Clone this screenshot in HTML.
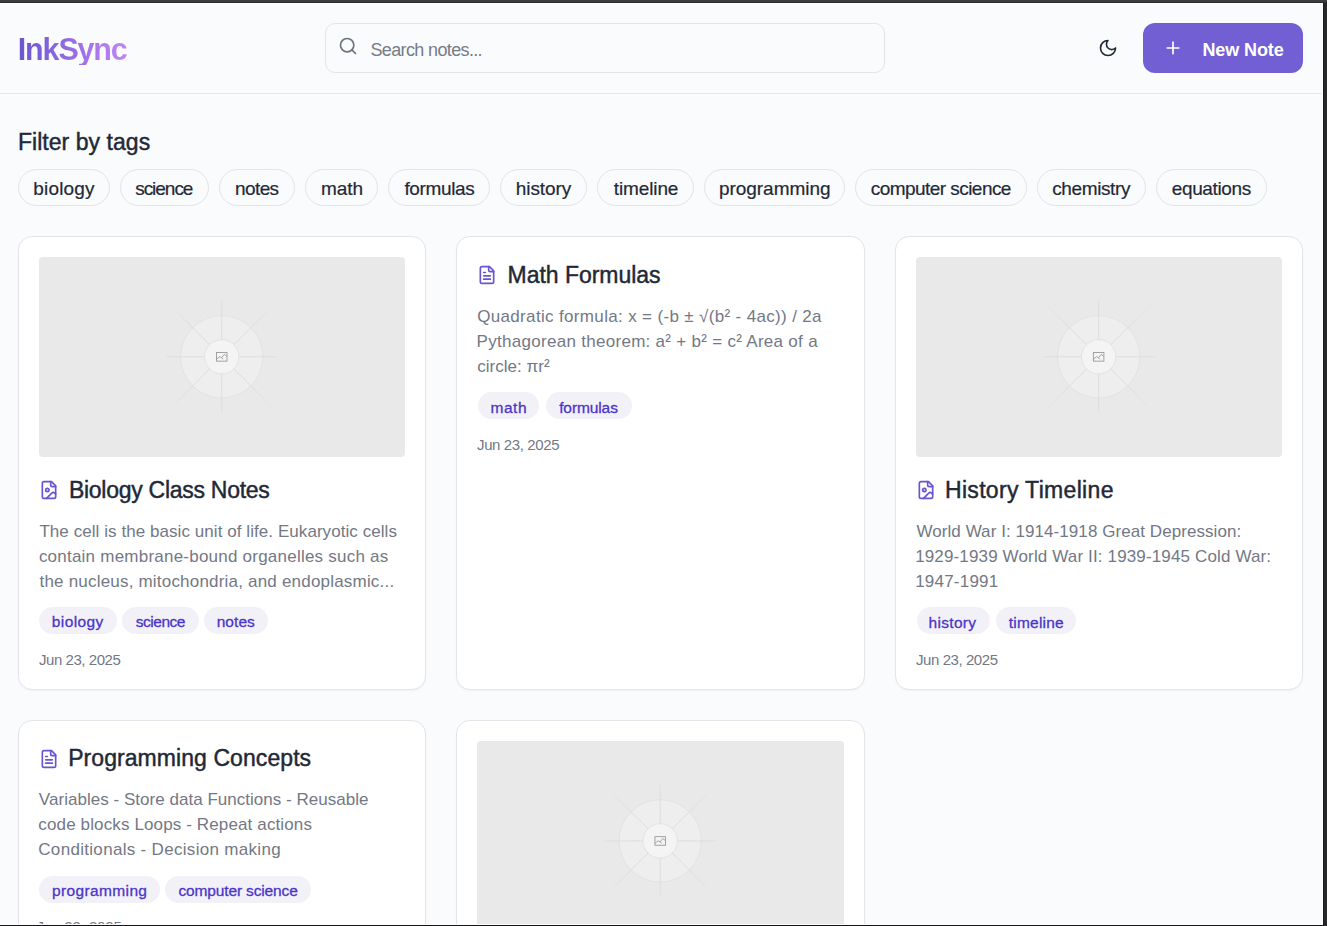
<!DOCTYPE html>
<html><head><meta charset="utf-8"><title>InkSync</title>
<style>
html,body{margin:0;padding:0}
body{width:1327px;height:926px;background:#262729;position:relative;overflow:hidden;font-family:"Liberation Sans",sans-serif}
.topbar{position:absolute;left:0;top:0;width:1327px;height:3px;background:linear-gradient(#3d3d3d 0,#3d3d3d 2px,#2c2c2c 2px)}
.rightbar{position:absolute;left:1323px;top:3px;width:4px;height:923px;background:linear-gradient(90deg,#1c1d1f 0,#1c1d1f 1px,#262729 1px)}
.botbar{position:absolute;left:0;top:925px;width:1323px;height:1px;background:#141516}
.vp{position:absolute;left:0;top:3px;width:1323px;height:922px;background:#fff;overflow:hidden}
.inner{position:absolute;left:0;top:1px;width:1322px;height:920px;background:#fafbfd}
.wl{position:absolute;background:#fff}
.hdr{position:absolute;left:0;top:93px;width:1322px;height:1px;background:#e5e7eb}
.t{position:absolute;white-space:nowrap}
.semi{-webkit-text-stroke:0.45px currentColor}
.grad{background:linear-gradient(90deg,#6a55d0 0%,#c385f6 100%);-webkit-background-clip:text;background-clip:text;color:transparent}
.ic{position:absolute;display:block}
.search{position:absolute;left:325px;top:23px;width:560px;height:50px;box-sizing:border-box;border:1px solid #e3e4ea;border-radius:10px;background:#fafbfd}
.btn{position:absolute;left:1143px;top:23px;width:160px;height:50px;border-radius:12px;background:#715fd3}
.fp{position:absolute;box-sizing:border-box;border:1px solid #e3e4ea;border-radius:999px;background:#fafbfd;text-align:center;color:#1f2937;white-space:nowrap;-webkit-text-stroke:0.2px currentColor}
.card{position:absolute;box-sizing:border-box;border:1px solid #e4e5eb;border-radius:14px;background:#fff;box-shadow:0 1px 2px rgba(0,0,0,0.04)}
.cp{position:absolute;box-sizing:border-box;border-radius:999px;background:#f3f1f8;text-align:center;color:#4a35c9;white-space:nowrap;-webkit-text-stroke:0.3px currentColor}
.ph{position:absolute;background:#e9e9e9;border-radius:4px;overflow:hidden}
.ph svg{display:block}
sup{font-size:0.62em;position:relative;top:-0.1em;vertical-align:top;line-height:0}
</style></head><body>
<div class="vp"><div class="inner"></div></div>
<div class="hdr"></div>
<div class="search"></div>
<div class="btn"></div>

<svg class="ic" style="left:338.00px;top:36.10px;width:20px;height:20px;" viewBox="0 0 24 24" fill="none" stroke="#6b7280" stroke-width="2" stroke-linecap="round" stroke-linejoin="round"><circle cx="11" cy="11" r="8"/><path d="m21 21-4.3-4.3"/></svg>
<svg class="ic" style="left:1097.80px;top:38.30px;width:20px;height:20px;" viewBox="0 0 24 24" fill="none" stroke="#1f2937" stroke-width="2" stroke-linecap="round" stroke-linejoin="round"><path d="M12 3a6 6 0 0 0 9 9 9 9 0 1 1-9-9Z"/></svg>
<svg class="ic" style="left:1163.20px;top:38.20px;width:20px;height:20px;" viewBox="0 0 24 24" fill="none" stroke="#ffffff" stroke-width="2" stroke-linecap="round" stroke-linejoin="round"><path d="M5 12h14"/><path d="M12 5v14"/></svg>
<div class="fp" style="left:18.00px;top:169.00px;width:92.00px;height:37.00px;font-size:19px;line-height:38.20px;letter-spacing:0.180px;text-indent:0.16px">biology</div>
<div class="fp" style="left:120.00px;top:169.00px;width:89.00px;height:37.00px;font-size:19px;line-height:38.20px;letter-spacing:-1.027px;text-indent:-1.42px">science</div>
<div class="fp" style="left:219.00px;top:169.00px;width:76.00px;height:37.00px;font-size:19px;line-height:38.20px;letter-spacing:-0.614px;text-indent:-0.44px">notes</div>
<div class="fp" style="left:305.00px;top:169.00px;width:73.00px;height:37.00px;font-size:19px;line-height:38.20px;letter-spacing:-0.041px;text-indent:0.90px">math</div>
<div class="fp" style="left:388.00px;top:169.00px;width:102.00px;height:37.00px;font-size:19px;line-height:38.20px;letter-spacing:-0.372px;text-indent:0.78px">formulas</div>
<div class="fp" style="left:500.00px;top:169.00px;width:87.00px;height:37.00px;font-size:19px;line-height:38.20px;letter-spacing:-0.057px;text-indent:0.00px">history</div>
<div class="fp" style="left:597.00px;top:169.00px;width:97.00px;height:37.00px;font-size:19px;line-height:38.20px;letter-spacing:-0.111px;text-indent:1.06px">timeline</div>
<div class="fp" style="left:704.00px;top:169.00px;width:141.00px;height:37.00px;font-size:19px;line-height:38.20px;letter-spacing:-0.022px;text-indent:0.46px">programming</div>
<div class="fp" style="left:855.00px;top:169.00px;width:172.00px;height:37.00px;font-size:19px;line-height:38.20px;letter-spacing:-0.552px;text-indent:-0.32px">computer science</div>
<div class="fp" style="left:1037.00px;top:169.00px;width:109.00px;height:37.00px;font-size:19px;line-height:38.20px;letter-spacing:-0.387px;text-indent:-0.68px">chemistry</div>
<div class="fp" style="left:1156.00px;top:169.00px;width:111.00px;height:37.00px;font-size:19px;line-height:38.20px;letter-spacing:-0.359px;text-indent:-0.32px">equations</div>
<div class="card" style="left:18.00px;top:236.00px;width:408.00px;height:454.00px"></div>
<div class="card" style="left:456.00px;top:236.00px;width:409.00px;height:454.00px"></div>
<div class="card" style="left:895.00px;top:236.00px;width:408.00px;height:454.00px"></div>
<div class="card" style="left:18.00px;top:720.00px;width:408.00px;height:460.00px"></div>
<div class="card" style="left:456.00px;top:720.00px;width:409.00px;height:460.00px"></div>
<div class="ph" style="left:39.40px;top:257.40px;width:365.50px;height:199.60px"><svg width="365.50" height="199.60" viewBox="0 0 365.50 199.60">
<defs><radialGradient id="fade39257" gradientUnits="userSpaceOnUse" cx="182.75" cy="99.80000000000001" r="79.52"><stop offset="0" stop-color="#d6d6d6"/><stop offset="0.6" stop-color="#dadada"/><stop offset="1" stop-color="#e9e9e9"/></radialGradient></defs>
<circle cx="182.75" cy="99.80000000000001" r="41.2" fill="#eeeeee" stroke="#e0e0e0" stroke-width="0.8"/>
<g stroke-width="0.8"><line x1="182.75" y1="99.80000000000001" x2="238.75" y2="99.80000000000001" stroke="url(#fade39257)"/><line x1="182.75" y1="99.80000000000001" x2="126.75" y2="99.80000000000001" stroke="url(#fade39257)"/><line x1="182.75" y1="99.80000000000001" x2="182.75" y2="155.8" stroke="url(#fade39257)"/><line x1="182.75" y1="99.80000000000001" x2="182.75" y2="43.80000000000001" stroke="url(#fade39257)"/><line x1="182.75" y1="99.80000000000001" x2="238.75" y2="155.8" stroke="url(#fade39257)"/><line x1="182.75" y1="99.80000000000001" x2="238.75" y2="43.80000000000001" stroke="url(#fade39257)"/><line x1="182.75" y1="99.80000000000001" x2="126.75" y2="155.8" stroke="url(#fade39257)"/><line x1="182.75" y1="99.80000000000001" x2="126.75" y2="43.80000000000001" stroke="url(#fade39257)"/></g>
<circle cx="182.75" cy="99.80000000000001" r="17.2" fill="#f4f4f4" stroke="#dedede" stroke-width="0.8"/>
<g transform="translate(177.05,95.10000000000001)" fill="none" stroke="#9a9a9a" stroke-width="0.9"><rect x="0.45" y="0.45" width="10.5" height="8.6"/><path d="M0.6 7 L3.5 4.6 L5.6 5.6 L8.3 2.3 L10.6 4.2"/><path d="M5.6 5.6 L7 7.2"/></g>
</svg></div>
<div class="ph" style="left:916.40px;top:257.40px;width:365.30px;height:199.60px"><svg width="365.30" height="199.60" viewBox="0 0 365.30 199.60">
<defs><radialGradient id="fade916257" gradientUnits="userSpaceOnUse" cx="182.65000000000003" cy="99.80000000000001" r="79.52"><stop offset="0" stop-color="#d6d6d6"/><stop offset="0.6" stop-color="#dadada"/><stop offset="1" stop-color="#e9e9e9"/></radialGradient></defs>
<circle cx="182.65000000000003" cy="99.80000000000001" r="41.2" fill="#eeeeee" stroke="#e0e0e0" stroke-width="0.8"/>
<g stroke-width="0.8"><line x1="182.65000000000003" y1="99.80000000000001" x2="238.65000000000003" y2="99.80000000000001" stroke="url(#fade916257)"/><line x1="182.65000000000003" y1="99.80000000000001" x2="126.65000000000003" y2="99.80000000000001" stroke="url(#fade916257)"/><line x1="182.65000000000003" y1="99.80000000000001" x2="182.65000000000003" y2="155.8" stroke="url(#fade916257)"/><line x1="182.65000000000003" y1="99.80000000000001" x2="182.65000000000003" y2="43.80000000000001" stroke="url(#fade916257)"/><line x1="182.65000000000003" y1="99.80000000000001" x2="238.65000000000003" y2="155.8" stroke="url(#fade916257)"/><line x1="182.65000000000003" y1="99.80000000000001" x2="238.65000000000003" y2="43.80000000000001" stroke="url(#fade916257)"/><line x1="182.65000000000003" y1="99.80000000000001" x2="126.65000000000003" y2="155.8" stroke="url(#fade916257)"/><line x1="182.65000000000003" y1="99.80000000000001" x2="126.65000000000003" y2="43.80000000000001" stroke="url(#fade916257)"/></g>
<circle cx="182.65000000000003" cy="99.80000000000001" r="17.2" fill="#f4f4f4" stroke="#dedede" stroke-width="0.8"/>
<g transform="translate(176.95000000000005,95.10000000000001)" fill="none" stroke="#9a9a9a" stroke-width="0.9"><rect x="0.45" y="0.45" width="10.5" height="8.6"/><path d="M0.6 7 L3.5 4.6 L5.6 5.6 L8.3 2.3 L10.6 4.2"/><path d="M5.6 5.6 L7 7.2"/></g>
</svg></div>
<div class="ph" style="left:477.20px;top:741.20px;width:366.40px;height:199.80px"><svg width="366.40" height="199.80" viewBox="0 0 366.40 199.80">
<defs><radialGradient id="fade477741" gradientUnits="userSpaceOnUse" cx="183.20000000000002" cy="99.89999999999998" r="79.52"><stop offset="0" stop-color="#d6d6d6"/><stop offset="0.6" stop-color="#dadada"/><stop offset="1" stop-color="#e9e9e9"/></radialGradient></defs>
<circle cx="183.20000000000002" cy="99.89999999999998" r="41.2" fill="#eeeeee" stroke="#e0e0e0" stroke-width="0.8"/>
<g stroke-width="0.8"><line x1="183.20000000000002" y1="99.89999999999998" x2="239.20000000000002" y2="99.89999999999998" stroke="url(#fade477741)"/><line x1="183.20000000000002" y1="99.89999999999998" x2="127.20000000000002" y2="99.89999999999998" stroke="url(#fade477741)"/><line x1="183.20000000000002" y1="99.89999999999998" x2="183.20000000000002" y2="155.89999999999998" stroke="url(#fade477741)"/><line x1="183.20000000000002" y1="99.89999999999998" x2="183.20000000000002" y2="43.89999999999998" stroke="url(#fade477741)"/><line x1="183.20000000000002" y1="99.89999999999998" x2="239.20000000000002" y2="155.89999999999998" stroke="url(#fade477741)"/><line x1="183.20000000000002" y1="99.89999999999998" x2="239.20000000000002" y2="43.89999999999998" stroke="url(#fade477741)"/><line x1="183.20000000000002" y1="99.89999999999998" x2="127.20000000000002" y2="155.89999999999998" stroke="url(#fade477741)"/><line x1="183.20000000000002" y1="99.89999999999998" x2="127.20000000000002" y2="43.89999999999998" stroke="url(#fade477741)"/></g>
<circle cx="183.20000000000002" cy="99.89999999999998" r="17.2" fill="#f4f4f4" stroke="#dedede" stroke-width="0.8"/>
<g transform="translate(177.50000000000003,95.19999999999997)" fill="none" stroke="#9a9a9a" stroke-width="0.9"><rect x="0.45" y="0.45" width="10.5" height="8.6"/><path d="M0.6 7 L3.5 4.6 L5.6 5.6 L8.3 2.3 L10.6 4.2"/><path d="M5.6 5.6 L7 7.2"/></g>
</svg></div>
<svg class="ic" style="left:39.40px;top:479.80px;width:20px;height:20px;" viewBox="0 0 24 24" fill="none" stroke="#6a55d0" stroke-width="2" stroke-linecap="round" stroke-linejoin="round"><path d="M15 2H6a2 2 0 0 0-2 2v16a2 2 0 0 0 2 2h12a2 2 0 0 0 2-2V7Z"/><path d="M14 2v4a2 2 0 0 0 2 2h4"/><circle cx="10" cy="12" r="2"/><path d="m20 17-1.296-1.296a2.41 2.41 0 0 0-3.408 0L9 22"/></svg>
<svg class="ic" style="left:477.20px;top:264.80px;width:20px;height:20px;" viewBox="0 0 24 24" fill="none" stroke="#6a55d0" stroke-width="2" stroke-linecap="round" stroke-linejoin="round"><path d="M15 2H6a2 2 0 0 0-2 2v16a2 2 0 0 0 2 2h12a2 2 0 0 0 2-2V7Z"/><path d="M14 2v4a2 2 0 0 0 2 2h4"/><path d="M10 9H8"/><path d="M16 13H8"/><path d="M16 17H8"/></svg>
<svg class="ic" style="left:916.30px;top:479.80px;width:20px;height:20px;" viewBox="0 0 24 24" fill="none" stroke="#6a55d0" stroke-width="2" stroke-linecap="round" stroke-linejoin="round"><path d="M15 2H6a2 2 0 0 0-2 2v16a2 2 0 0 0 2 2h12a2 2 0 0 0 2-2V7Z"/><path d="M14 2v4a2 2 0 0 0 2 2h4"/><circle cx="10" cy="12" r="2"/><path d="m20 17-1.296-1.296a2.41 2.41 0 0 0-3.408 0L9 22"/></svg>
<svg class="ic" style="left:39.40px;top:749.00px;width:20px;height:20px;" viewBox="0 0 24 24" fill="none" stroke="#6a55d0" stroke-width="2" stroke-linecap="round" stroke-linejoin="round"><path d="M15 2H6a2 2 0 0 0-2 2v16a2 2 0 0 0 2 2h12a2 2 0 0 0 2-2V7Z"/><path d="M14 2v4a2 2 0 0 0 2 2h4"/><path d="M10 9H8"/><path d="M16 13H8"/><path d="M16 17H8"/></svg>
<div class="cp" style="left:39.00px;top:607.00px;width:77.70px;height:27.00px;font-size:15.5px;line-height:30.00px;letter-spacing:0.398px;text-indent:-0.16px">biology</div>
<div class="cp" style="left:121.90px;top:607.00px;width:76.70px;height:27.00px;font-size:15.5px;line-height:30.00px;letter-spacing:-0.485px;text-indent:0.42px">science</div>
<div class="cp" style="left:204.30px;top:607.00px;width:63.50px;height:27.00px;font-size:15.5px;line-height:30.00px;letter-spacing:0.082px;text-indent:-0.50px">notes</div>
<div class="cp" style="left:477.50px;top:392.00px;width:61.90px;height:27.00px;font-size:15.5px;line-height:31.00px;letter-spacing:0.515px;text-indent:0.70px">math</div>
<div class="cp" style="left:545.70px;top:392.00px;width:86.00px;height:27.00px;font-size:15.5px;line-height:31.00px;letter-spacing:-0.100px;text-indent:-0.42px">formulas</div>
<div class="cp" style="left:916.50px;top:607.00px;width:73.10px;height:27.00px;font-size:15.5px;line-height:32.00px;letter-spacing:0.300px;text-indent:-1.16px">history</div>
<div class="cp" style="left:995.60px;top:607.00px;width:80.70px;height:27.00px;font-size:15.5px;line-height:32.00px;letter-spacing:0.232px;text-indent:0.76px">timeline</div>
<div class="cp" style="left:39.20px;top:876.00px;width:120.50px;height:27.00px;font-size:15.5px;line-height:30.00px;letter-spacing:0.373px;text-indent:0.48px">programming</div>
<div class="cp" style="left:164.90px;top:876.00px;width:145.80px;height:27.00px;font-size:15.5px;line-height:30.00px;letter-spacing:-0.137px;text-indent:0.54px">computer science</div>
<div class="t grad" id="logo" style="left:17.82px;top:34.00px;font-size:30.5px;line-height:30.5px;letter-spacing:-1.165px;font-weight:bold;">InkSync</div>
<div class="t" id="search" style="left:370.48px;top:41.00px;font-size:18px;line-height:18px;letter-spacing:-0.638px;color:#767b88;">Search notes...</div>
<div class="t" id="newnote" style="left:1202.48px;top:41.00px;font-size:18px;line-height:18px;letter-spacing:-0.120px;font-weight:bold;color:#ffffff;">New Note</div>
<div class="t semi" id="filter" style="left:17.95px;top:131.00px;font-size:23px;line-height:23px;letter-spacing:0.043px;color:#1f2937;">Filter by tags</div>
<div class="t semi" id="t1" style="left:68.94px;top:479.00px;font-size:23px;line-height:23px;letter-spacing:-0.273px;color:#1f2937;">Biology Class Notes</div>
<div class="t" id="b1a" style="left:39.41px;top:523.00px;font-size:17px;line-height:17px;letter-spacing:0.063px;color:#737885;">The cell is the basic unit of life. Eukaryotic cells</div>
<div class="t" id="b1b" style="left:38.88px;top:548.00px;font-size:17px;line-height:17px;letter-spacing:0.229px;color:#737885;">contain membrane-bound organelles such as</div>
<div class="t" id="b1c" style="left:39.50px;top:573.00px;font-size:17px;line-height:17px;letter-spacing:0.199px;color:#737885;">the nucleus, mitochondria, and endoplasmic...</div>
<div class="t" id="d1" style="left:38.96px;top:652.00px;font-size:15px;line-height:15px;letter-spacing:-0.440px;color:#737885;">Jun 23, 2025</div>
<div class="t semi" id="t2" style="left:507.53px;top:264.00px;font-size:23px;line-height:23px;letter-spacing:-0.029px;color:#1f2937;">Math Formulas</div>
<div class="t" id="b2a" style="left:477.14px;top:308.00px;font-size:17px;line-height:17px;letter-spacing:0.343px;color:#737885;">Quadratic formula: x = (-b ± √(b² - 4ac)) / 2a</div>
<div class="t" id="b2b" style="left:476.60px;top:333.00px;font-size:17px;line-height:17px;letter-spacing:0.289px;color:#737885;">Pythagorean theorem: a² + b² = c² Area of a</div>
<div class="t" id="b2c" style="left:477.14px;top:358.00px;font-size:17px;line-height:17px;letter-spacing:0.030px;color:#737885;">circle: πr²</div>
<div class="t" id="d2" style="left:477.06px;top:437.00px;font-size:15px;line-height:15px;letter-spacing:-0.390px;color:#737885;">Jun 23, 2025</div>
<div class="t semi" id="t3" style="left:944.94px;top:479.00px;font-size:23px;line-height:23px;letter-spacing:0.329px;color:#1f2937;">History Timeline</div>
<div class="t" id="b3a" style="left:916.43px;top:523.00px;font-size:17px;line-height:17px;letter-spacing:0.066px;color:#737885;">World War I: 1914-1918 Great Depression:</div>
<div class="t" id="b3b" style="left:915.16px;top:548.00px;font-size:17px;line-height:17px;letter-spacing:0.143px;color:#737885;">1929-1939 World War II: 1939-1945 Cold War:</div>
<div class="t" id="b3c" style="left:915.16px;top:573.00px;font-size:17px;line-height:17px;letter-spacing:0.219px;color:#737885;">1947-1991</div>
<div class="t" id="d3" style="left:916.06px;top:652.00px;font-size:15px;line-height:15px;letter-spacing:-0.434px;color:#737885;">Jun 23, 2025</div>
<div class="t semi" id="t4" style="left:68.16px;top:747.00px;font-size:23px;line-height:23px;letter-spacing:0.071px;color:#1f2937;">Programming Concepts</div>
<div class="t" id="b4a" style="left:38.87px;top:791.00px;font-size:17px;line-height:17px;letter-spacing:0.028px;color:#737885;">Variables - Store data Functions - Reusable</div>
<div class="t" id="b4b" style="left:38.36px;top:816.00px;font-size:17px;line-height:17px;letter-spacing:0.129px;color:#737885;">code blocks Loops - Repeat actions</div>
<div class="t" id="b4c" style="left:38.29px;top:841.00px;font-size:17px;line-height:17px;letter-spacing:0.310px;color:#737885;">Conditionals - Decision making</div>
<div class="t" id="d4" style="left:36.48px;top:919.00px;font-size:15px;line-height:15px;letter-spacing:-0.120px;color:#737885;">Jun 23, 2025</div>
<div class="wl" style="left:0;top:3px;width:1323px;height:1px"></div><div class="wl" style="left:0;top:924px;width:1323px;height:1px"></div><div class="wl" style="left:1322px;top:3px;width:1px;height:922px"></div>
<div class="topbar"></div><div class="rightbar"></div><div class="botbar"></div>
</body></html>
